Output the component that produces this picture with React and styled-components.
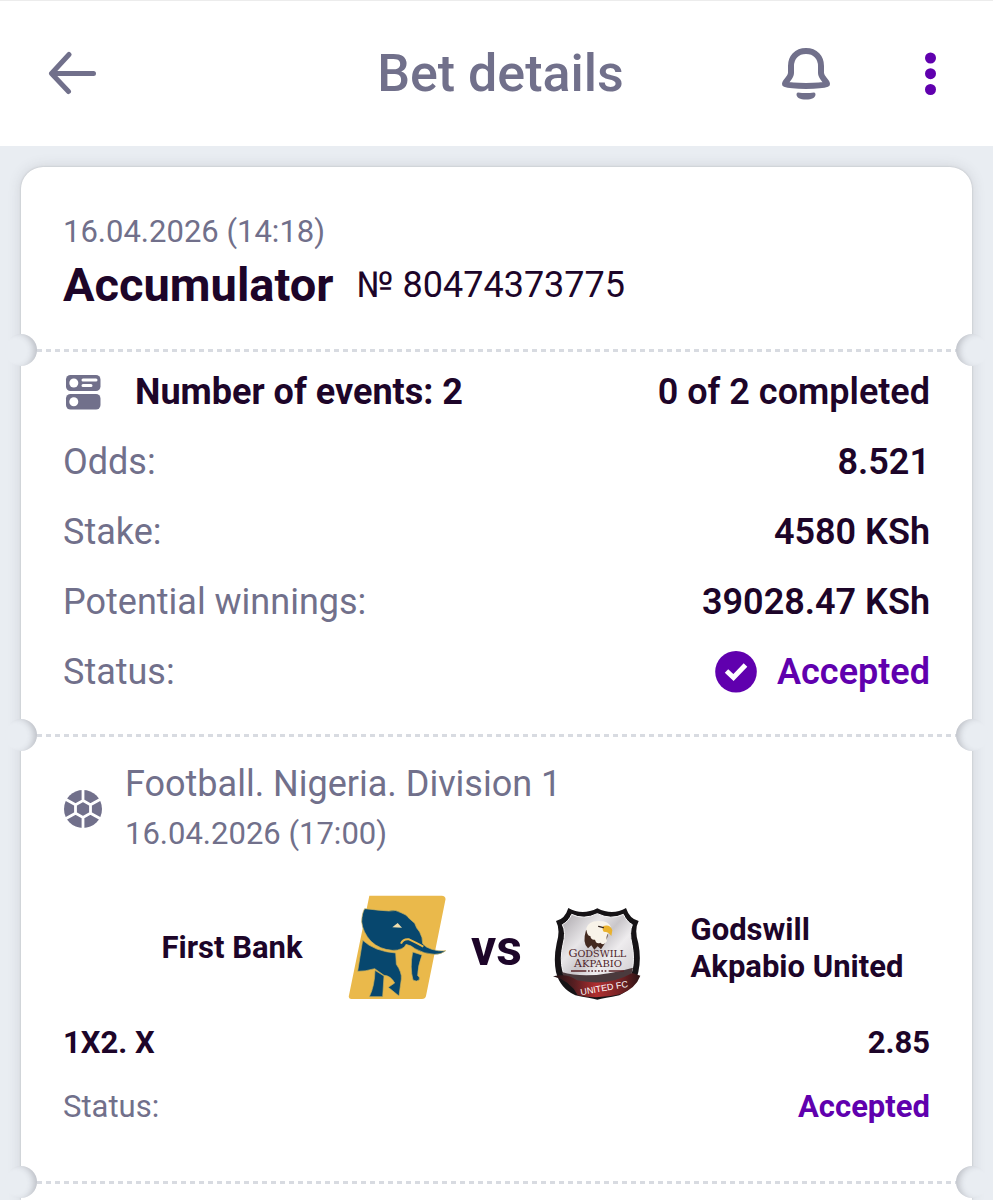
import React from 'react';
import styled, { createGlobalStyle } from 'styled-components'

const theme = {
  colors: {
    page: '#e9edf2',
    white: '#ffffff',
    grey: '#71708b',
    dark: '#1d0529',
    purple: '#6000ae',
    line: '#d8dbe1',
  },
}

const GlobalStyle = createGlobalStyle`
  * {
    box-sizing: border-box;
  }

  body {
    margin: 0;
    background-color: ${theme.colors.page};
    color: ${theme.colors.dark};
    font-family: Roboto, "Liberation Sans", sans-serif;
  }

  h1, h2, p, dl, dt, dd {
    margin: 0;
  }

  svg {
    display: block;
    flex-shrink: 0;
  }
`

const Page = styled.div`
  display: flex;
  flex-direction: column;
  min-height: 100vh;
`

const Header = styled.header`
  display: grid;
  grid-template-columns: 1fr auto 1fr;
  align-items: center;
  height: 146px;
  padding: 0 40px 0 48px;
  background-color: ${theme.colors.white};
  border-top: 1px solid #ececec;
`

const Title = styled.h1`
  color: ${theme.colors.grey};
  font-size: 52px;
  font-weight: 500;
  line-height: 60px;
`

const Actions = styled.div`
  display: flex;
  align-items: center;
  justify-content: flex-end;
  gap: 76px;
`

const IconButton = styled.button`
  display: flex;
  align-items: center;
  justify-self: start;
  padding: 0;
  border: 0;
  background: none;
  color: ${({ $accent }) => ($accent ? theme.colors.purple : theme.colors.grey)};
  cursor: pointer;
`

const Ticket = styled.main`
  flex: 1;
  margin: 21px 21px 0;
  background-color: ${theme.colors.white};
  border-radius: 22px 22px 0 0;
  box-shadow: 0 0 2px rgba(60, 60, 70, 0.25), 0 0 14px rgba(60, 60, 70, 0.15);
`

const Section = styled.section`
  padding: ${({ $top }) => $top}px 42px ${({ $bottom }) => $bottom}px;
`

const Tear = styled.div`
  display: flex;
  align-items: center;
  justify-content: space-between;
  height: 32px;
  margin: 0 -16px;
`

const Notch = styled.span`
  width: 32px;
  height: 32px;
  border-radius: 50%;
  background-color: ${theme.colors.page};
  box-shadow: inset ${({ $right }) => ($right ? '6px' : '-6px')} 1px 6px -3px rgba(60, 60, 70, 0.25);
`

const Dashes = styled.span`
  flex: 1;
  height: 3px;
  background: repeating-linear-gradient(
    to right,
    ${theme.colors.line} 0 5px,
    transparent 5px 9px
  );
`

const DateText = styled.p`
  color: ${theme.colors.grey};
  font-size: 31px;
  line-height: ${({ $line }) => $line}px;
`

const BetTitle = styled.div`
  display: flex;
  align-items: center;
  gap: 23px;
  margin-top: 4px;
  line-height: 56px;
`

const BetType = styled.h2`
  font-size: 47px;
  font-weight: 700;
`

const BetNumber = styled.p`
  font-size: 36px;
`

const Rows = styled.dl`
  display: flex;
  flex-direction: column;
  gap: ${({ $small }) => ($small ? 24 : 28)}px;
  font-size: ${({ $small }) => ($small ? 31 : 36)}px;
  line-height: ${({ $small }) => ($small ? 40 : 42)}px;
`

const Row = styled.div`
  display: flex;
  align-items: center;
  justify-content: space-between;
`

const Label = styled.dt`
  display: flex;
  align-items: center;
  gap: 32px;
  color: ${({ $strong }) => ($strong ? theme.colors.dark : theme.colors.grey)};
  font-weight: ${({ $strong }) => ($strong ? 700 : 400)};
`

const Value = styled.dd`
  display: flex;
  align-items: center;
  gap: 20px;
  color: ${({ $accent }) => ($accent ? theme.colors.purple : theme.colors.dark)};
  font-weight: ${({ $bold }) => ($bold ? 700 : 600)};
`

const League = styled.div`
  display: flex;
  align-items: center;
  gap: 22px;
`

const LeagueName = styled.h2`
  color: ${theme.colors.grey};
  font-size: 36px;
  font-weight: 400;
  line-height: 50px;
`

const Match = styled.div`
  display: grid;
  grid-template-columns: 1fr auto 1fr;
  align-items: center;
  gap: 40px;
  margin: 36px 0 23px;
`

const Team = styled.p`
  font-size: 31px;
  font-weight: 700;
  line-height: 37px;
  text-align: ${({ $home }) => ($home ? 'right' : 'left')};
`

const Versus = styled.div`
  display: flex;
  align-items: center;
`

const LogoBox = styled.div`
  display: flex;
  justify-content: center;
  width: 108px;
`

const Vs = styled.span`
  width: 92px;
  font-size: 50px;
  font-weight: 700;
  line-height: 54px;
  text-align: center;
`

const ArrowIcon = () => (
  <svg width="48" height="46" viewBox="0 0 48 46" fill="none" stroke="currentColor" strokeWidth="5" strokeLinecap="round" strokeLinejoin="round">
    <path d="M45.500 22.500H4M21 3.500L3.500 22.500L20.500 40.500" />
  </svg>
)

const BellIcon = () => (
  <svg width="50" height="52" viewBox="0 0 50 52">
    <path
      d="M25 3C15.500 3 10 9.500 10 18v7c0 5-6 8-6 11 7 2.500 35 2.500 42 0 0-3-6-6-6-11v-7C40 9.500 34.500 3 25 3z"
      fill="none" stroke="currentColor" strokeWidth="6" strokeLinejoin="round"
    />
    <path d="M17 44.500q8 1 16 0q1.500 0 1.500 2c0 3-3.500 5-9.500 5s-9.500-2-9.500-5q0-2 1.500-2z" fill="currentColor" />
  </svg>
)

const DotsIcon = () => (
  <svg width="46" height="44" viewBox="0 0 46 44" fill="currentColor">
    <circle cx="23.500" cy="6" r="5.500" />
    <circle cx="23.500" cy="21.700" r="5.500" />
    <circle cx="23.500" cy="37.500" r="5.500" />
  </svg>
)

const EventsIcon = () => (
  <svg width="40" height="36" viewBox="0 0 40 36">
    <rect x="3" y="1" width="34.500" height="16" rx="4.500" fill={theme.colors.grey} />
    <rect x="3" y="20" width="34.500" height="15.500" rx="4.500" fill={theme.colors.grey} />
    <circle cx="10.800" cy="9" r="4.500" fill="#fff" />
    <circle cx="10.800" cy="27.700" r="4.500" fill="#fff" />
    <path d="M20 6H33M20 11.500H28" stroke="#fff" strokeWidth="3" strokeLinecap="round" />
  </svg>
)

const CheckIcon = () => (
  <svg width="42" height="42" viewBox="0 0 42 42">
    <circle cx="21" cy="20.800" r="20.800" fill={theme.colors.purple} />
    <path d="M11.500 20L18.500 26.500L30.500 14" fill="none" stroke="#fff" strokeWidth="5" />
  </svg>
)

const BallIcon = () => (
  <svg width="40" height="40" viewBox="0 0 40 40">
    <circle cx="20" cy="20" r="19" fill={theme.colors.grey} />
    <path
      d="M20 11.500L27.500 15.800V24.200L20 28.500L12.500 24.200V15.800ZM20 11.500V0M20 28.500V40M27.500 15.800L37 10.500M27.500 24.200L37 29.500M12.500 15.800L3 10.500M12.500 24.200L3 29.500"
      fill="none" stroke="#fff" strokeWidth="2.800"
    />
  </svg>
)

const ElephantLogo = () => (
  <svg width="98" height="105" viewBox="57 42 294 315" role="img" aria-label="First Bank">
    <path d="M121 44H338Q352 45 349 58L291 345Q289 354 279 354H66Q57 353 60 343Z" fill="#eab94b" />
    <g fill="#07476e" stroke="#c9b05c" strokeWidth="2">
      <path d="M107 83Q150 88 180 90Q200 84 218 96Q233 101 238 110L257 127Q261 141 272 153Q281 169 281 188Q291 200 308 205Q329 212 350 209Q338 220 317 220Q285 219 258 203Q247 193 231 190Q228 199 218 203Q206 209 190 208Q151 205 126 181Q101 153 98 122Q99 96 107 83Z" />
      <path d="M101 178Q136 211 200 216L202 250Q219 274 217 294L210 345L178 319L197 306Q185 284 165 283L137 263Q110 271 86 271Z" />
      <path d="M138 268L165 285L161 347H121Q137 315 138 268Z" />
      <path d="M251 213L279 222Q266 256 266 284Q273 287 271 296Q263 304 252 297Q242 260 251 213Z" />
    </g>
    <path d="M190 139L206 126L219 140Z" fill="#f1dfaf" />
    <path d="M216 188Q222 173 240 175Q260 184 283 197" fill="none" stroke="#eab94b" strokeWidth="6" />
  </svg>
)

const CrestLogo = () => (
  <svg width="88" height="105" viewBox="36 12 264 315" role="img" aria-label="Godswill Akpabio United">
    <defs>
      <linearGradient id="silver" x1="0" y1="0" x2="1" y2="1">
        <stop offset="0" stopColor="#a9a5aa" />
        <stop offset="0.3" stopColor="#e8e6e8" />
        <stop offset="0.45" stopColor="#c9c6ca" />
        <stop offset="0.6" stopColor="#eeecee" />
        <stop offset="1" stopColor="#c4c0c4" />
      </linearGradient>
      <linearGradient id="banner" x1="0" y1="0" x2="1" y2="0">
        <stop offset="0" stopColor="#1f1214" />
        <stop offset="0.25" stopColor="#5a1f22" />
        <stop offset="0.5" stopColor="#b02f30" />
        <stop offset="0.75" stopColor="#7a2426" />
        <stop offset="1" stopColor="#2a1214" />
      </linearGradient>
    </defs>
    <path d="M82 51Q123 75 169 52Q215 75 255 51Q266 84 293 90Q279 116 292 157Q301 204 292 243Q281 291 235 313Q190 322 169 326Q148 322 103 313Q57 292 45 243Q37 203 47 157Q59 116 45 90Q72 84 82 51Z" fill="#161316" />
    <path d="M92 70Q128 88 169 68Q210 88 247 70Q257 92 274 101Q264 124 273 160Q282 204 273 239Q260 286 219 296L169 310L119 296Q77 282 65 239Q56 204 66 160Q76 124 64 101Q82 92 92 70Z" fill="url(#silver)" stroke="#f8f7f8" strokeWidth="3" />
    <path d="M62 243Q145 268 276 230Q267 285 218 301L169 316L119 300Q77 285 62 243Z" fill="#4a3a3d" />
    <path d="M36 256Q79 245 108 268Q200 288 274 246L298 254Q285 291 238 310Q169 326 110 313Q88 269 36 256Z" fill="url(#banner)" />
    <path d="M135 118Q123 157 141 172L151 163L160 176L170 166L180 175L190 160Q203 138 200 118Z" fill="#43291f" />
    <path d="M136 112Q141 91 172 90Q200 89 209 106L205 124Q193 134 198 150Q189 167 178 155Q166 161 162 146Q150 148 148 135Q138 137 136 112Z" fill="#f8f3e9" />
    <path d="M187 105Q208 99 214 118L211 135Q203 122 188 122Q182 113 187 105Z" fill="#eab22d" />
    <path d="M173 106L187 110" stroke="#332521" strokeWidth="4" strokeLinecap="round" />
    <g fill="#4d2227" fontFamily="'DejaVu Serif', serif" textAnchor="middle">
      <text x="169" y="198" fontSize="34">G<tspan fontSize="29">ODSWILL</tspan></text>
      <text x="171" y="228" fontSize="33">A<tspan fontSize="30">KPABIO</tspan></text>
    </g>
    <path d="M90 240H136M203 240H249" stroke="#5b2428" strokeWidth="4" />
    <path d="M141 240H199" stroke="#5b2428" strokeWidth="5" strokeDasharray="5 5" />
    <text x="191" y="300" fill="#fff" fontFamily="'Liberation Sans', sans-serif" fontSize="27" textAnchor="middle" transform="rotate(-10 191 300)">UNITED FC</text>
  </svg>
)

const TearLine = () => (
  <Tear aria-hidden="true">
    <Notch />
    <Dashes />
    <Notch $right />
  </Tear>
)

const InfoRow = ({ label, value, icon, accent, bold, strong }) => (
  <Row>
    <Label $strong={strong}>{icon}{label}</Label>
    <Value $accent={accent} $bold={bold}>
      {accent && !bold && <CheckIcon />}
      {value}
    </Value>
  </Row>
)

const App = () => {
  return (
    <Page>
      <GlobalStyle />
      <Header>
        <IconButton aria-label="Back"><ArrowIcon /></IconButton>
        <Title>Bet details</Title>
        <Actions>
          <IconButton aria-label="Notifications"><BellIcon /></IconButton>
          <IconButton $accent aria-label="More"><DotsIcon /></IconButton>
        </Actions>
      </Header>
      <Ticket>
        <Section $top={44} $bottom={21}>
          <DateText $line={42}>16.04.2026 (14:18)</DateText>
          <BetTitle>
            <BetType>Accumulator</BetType>
            <BetNumber>№ 80474373775</BetNumber>
          </BetTitle>
        </Section>
        <TearLine />
        <Section $top={5} $bottom={26}>
          <Rows>
            <InfoRow strong icon={<EventsIcon />} label="Number of events: 2" value="0 of 2 completed" />
            <InfoRow label="Odds:" value="8.521" />
            <InfoRow label="Stake:" value="4580 KSh" />
            <InfoRow label="Potential winnings:" value="39028.47 KSh" />
            <InfoRow label="Status:" value="Accepted" accent />
          </Rows>
        </Section>
        <TearLine />
        <Section $top={8} $bottom={39}>
          <League>
            <BallIcon />
            <div>
              <LeagueName>Football. Nigeria. Division 1</LeagueName>
              <DateText $line={50}>16.04.2026 (17:00)</DateText>
            </div>
          </League>
          <Match>
            <Team $home>First Bank</Team>
            <Versus>
              <LogoBox><ElephantLogo /></LogoBox>
              <Vs>vs</Vs>
              <LogoBox><CrestLogo /></LogoBox>
            </Versus>
            <Team>Godswill Akpabio United</Team>
          </Match>
          <Rows $small>
            <InfoRow strong bold label="1X2. X" value="2.85" />
            <InfoRow accent bold label="Status:" value="Accepted" />
          </Rows>
        </Section>
        <TearLine />
      </Ticket>
    </Page>
  )
}

export default App;
